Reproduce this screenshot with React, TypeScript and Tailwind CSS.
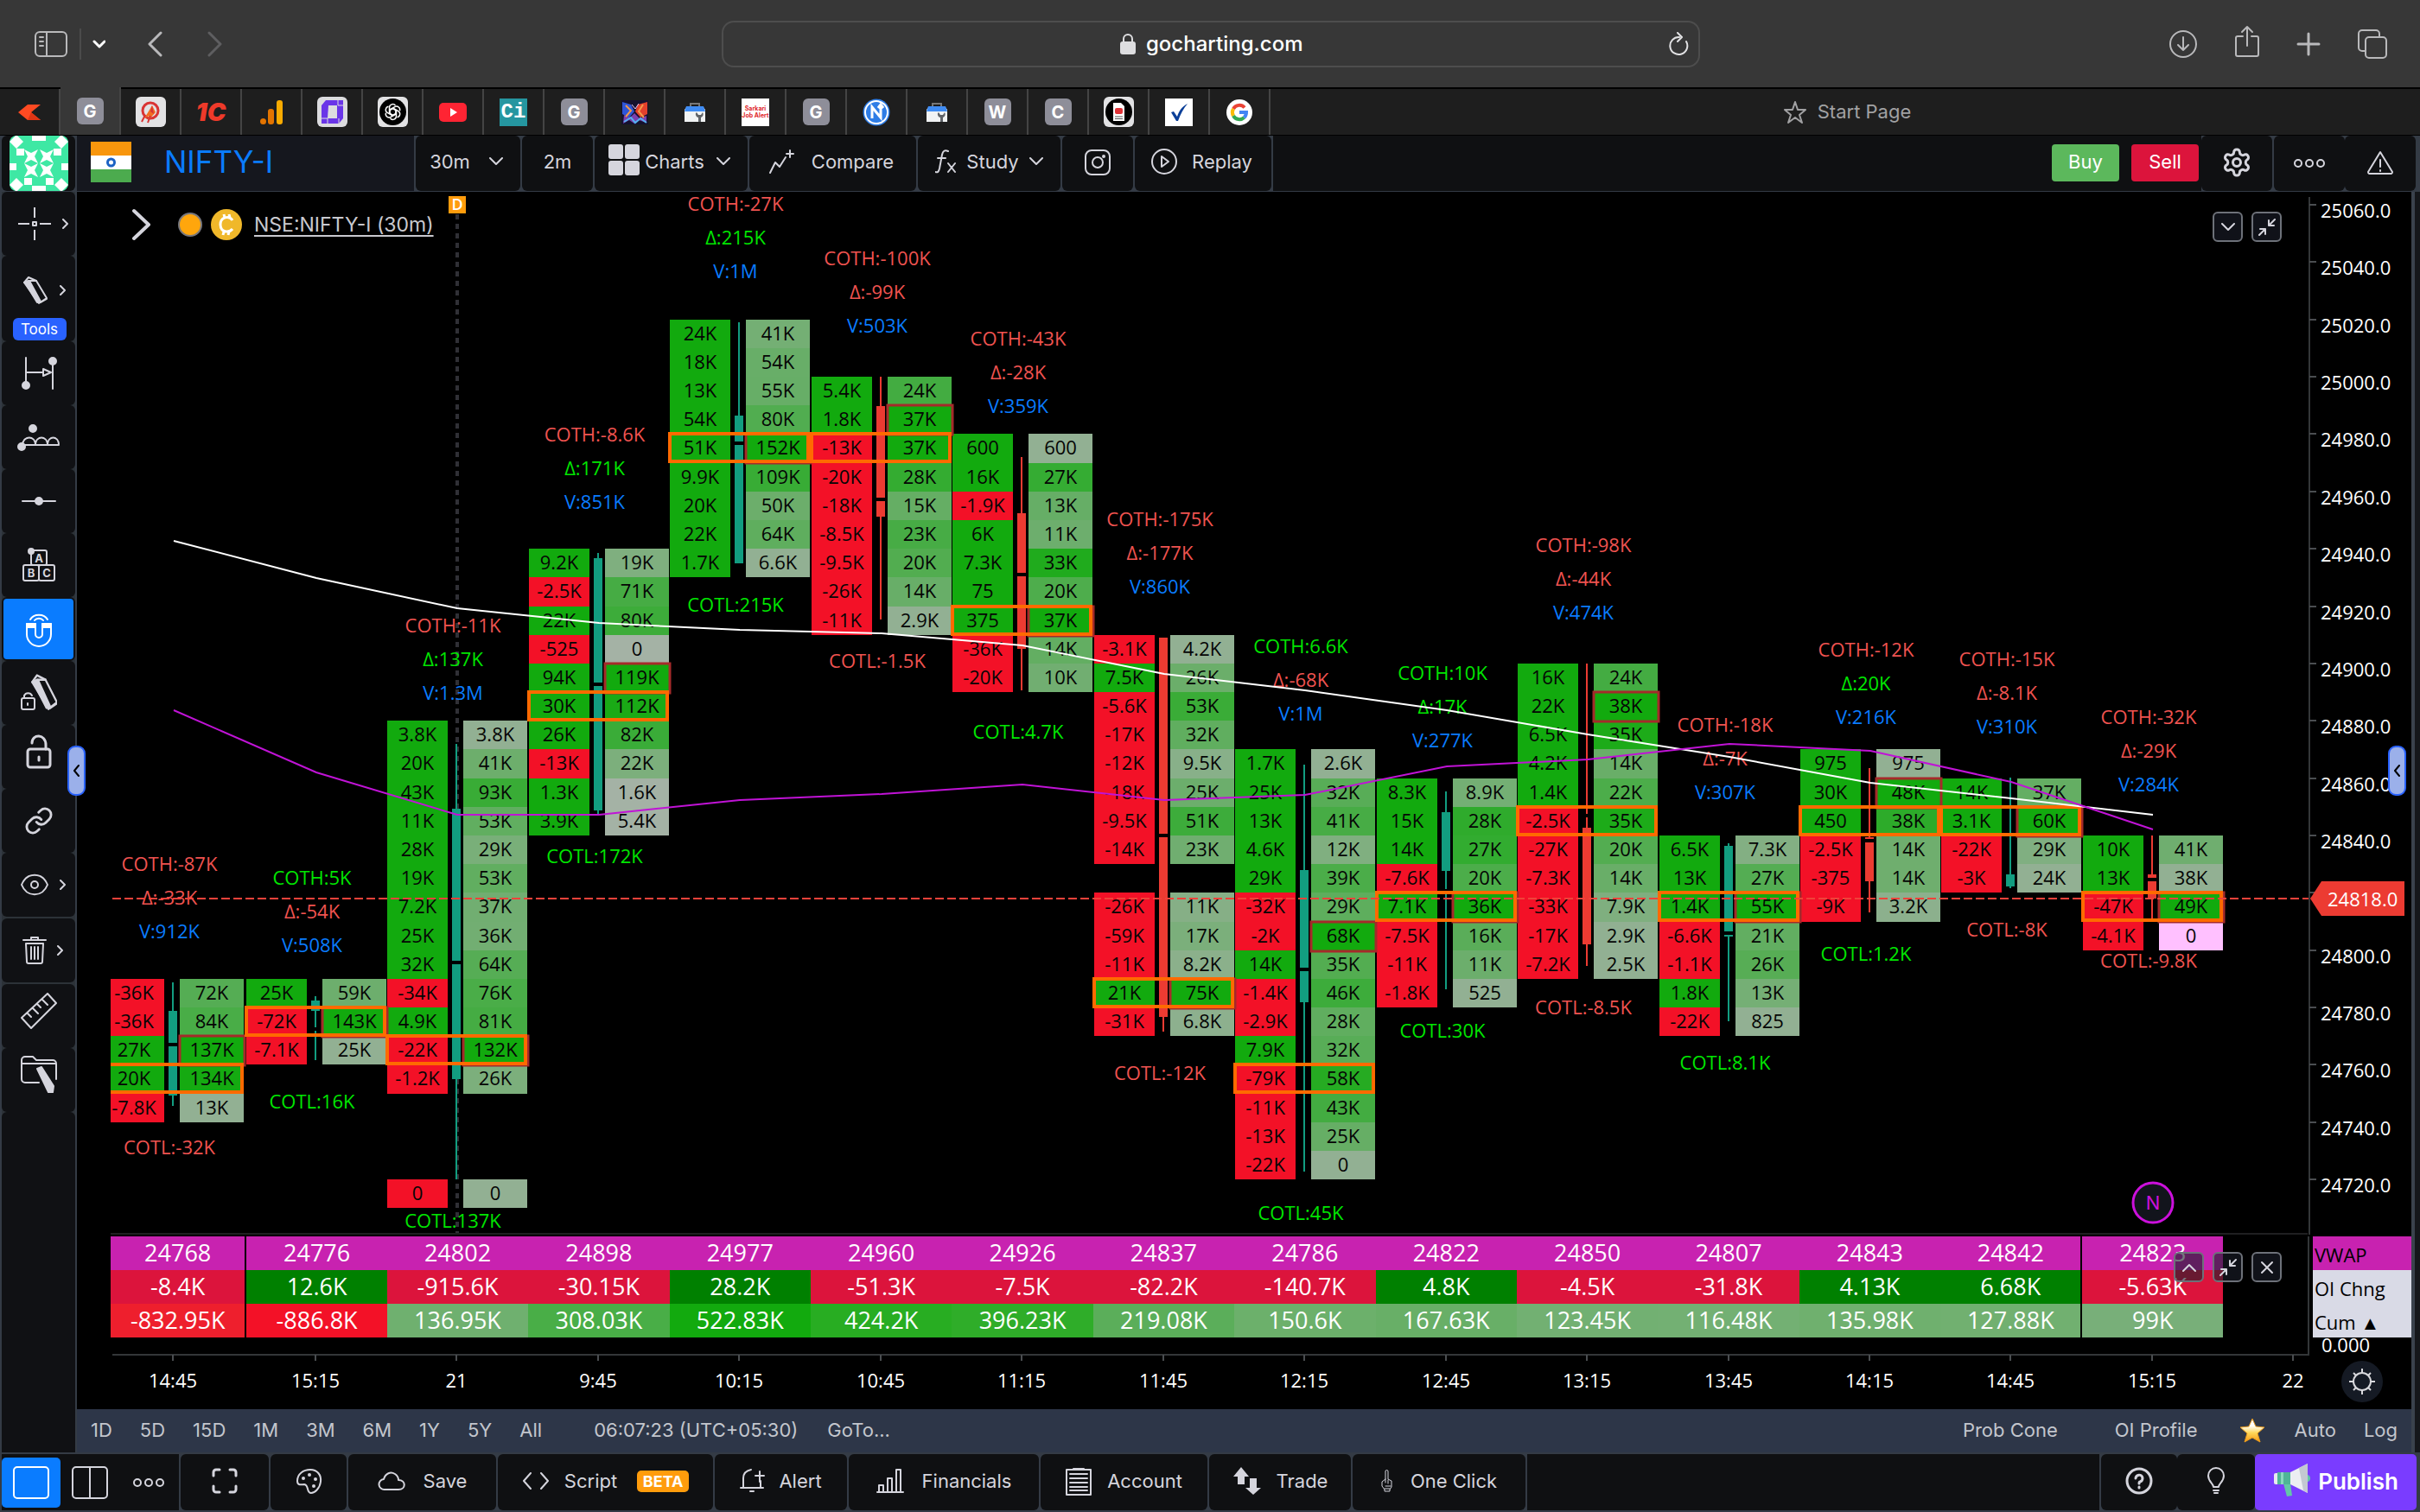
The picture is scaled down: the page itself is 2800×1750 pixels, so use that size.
import type { ReactNode } from "react";

type Row = [string, string] | null;
type Candle = { up: boolean; wick: [number, number]; body: [number, number]; gap?: [number, number] };
type Bar = {
  time: string;
  top: number;
  rows: Row[];
  poc: number;
  max: number;
  coth: string;
  delta: string;
  vol: string;
  cotl: string;
  candle: Candle;
};

const r = (s: string): Row[] =>
  s.split(" ").map((p) => (p === "_" ? null : (p.split("/") as [string, string])));

const BARS: Bar[] = [
  { time: "14:45", top: 24790, rows: r("-36K/72K -36K/84K 27K/137K 20K/134K -7.8K/13K"), poc: 3, max: 2, coth: "-87K", delta: "-33K", vol: "912K", cotl: "-32K", candle: { up: true, wick: [1137, 1280], body: [1170, 1268], gap: [1207, 1211] } },
  { time: "15:15", top: 24790, rows: r("25K/59K -72K/143K -7.1K/25K"), poc: 1, max: 1, coth: "5K", delta: "-54K", vol: "508K", cotl: "16K", candle: { up: true, wick: [1153, 1227], body: [1158, 1170], gap: [1189, 1193] } },
  { time: "21", top: 24880, rows: r("3.8K/3.8K 20K/41K 43K/93K 11K/53K 28K/29K 19K/53K 7.2K/37K 25K/36K 32K/64K -34K/76K 4.9K/81K -22K/132K -1.2K/26K _ _ _ 0/0"), poc: 11, max: 11, coth: "-11K", delta: "137K", vol: "1.3M", cotl: "137K", candle: { up: true, wick: [861, 1365], body: [936, 1249], gap: [1112, 1116] } },
  { time: "9:45", top: 24940, rows: r("9.2K/19K -2.5K/71K 22K/80K -525/0 94K/119K 30K/112K 26K/82K -13K/22K 1.3K/1.6K 3.9K/5.4K"), poc: 5, max: 4, coth: "-8.6K", delta: "171K", vol: "851K", cotl: "172K", candle: { up: true, wick: [640, 943], body: [646, 938], gap: [790, 794] } },
  { time: "10:15", top: 25020, rows: r("24K/41K 18K/54K 13K/55K 54K/80K 51K/152K 9.9K/109K 20K/50K 22K/64K 1.7K/6.6K"), poc: 4, max: 4, coth: "-27K", delta: "215K", vol: "1M", cotl: "215K", candle: { up: true, wick: [373, 652], body: [481, 652], gap: [511, 515] } },
  { time: "10:45", top: 25000, rows: r("5.4K/24K 1.8K/37K -13K/37K -20K/28K -18K/15K -8.5K/23K -9.5K/20K -26K/14K -11K/2.9K"), poc: 2, max: 1, coth: "-100K", delta: "-99K", vol: "503K", cotl: "-1.5K", candle: { up: false, wick: [436, 717], body: [470, 598], gap: [576, 580] } },
  { time: "11:15", top: 24980, rows: r("600/600 16K/27K -1.9K/13K 6K/11K 7.3K/33K 75/20K 375/37K -36K/14K -20K/10K"), poc: 6, max: 6, coth: "-43K", delta: "-28K", vol: "359K", cotl: "4.7K", candle: { up: false, wick: [529, 799], body: [594, 751], gap: [663, 667] } },
  { time: "11:45", top: 24910, rows: r("-3.1K/4.2K 7.5K/26K -5.6K/53K -17K/32K -12K/9.5K -18K/25K -9.5K/51K -14K/23K _ -26K/11K -59K/17K -11K/8.2K 21K/75K -31K/6.8K"), poc: 12, max: 12, coth: "-175K", delta: "-177K", vol: "860K", cotl: "-12K", candle: { up: false, wick: [738, 1194], body: [738, 1177], gap: [965, 969] } },
  { time: "12:15", top: 24870, rows: r("1.7K/2.6K 25K/32K 13K/41K 4.6K/12K 29K/39K -32K/29K -2K/68K 14K/35K -1.4K/46K -2.9K/28K 7.9K/32K -79K/58K -11K/43K -13K/25K -22K/0"), poc: 11, max: 6, coth: "6.6K", delta: "-68K", vol: "1M", cotl: "45K", candle: { up: true, wick: [885, 1356], body: [1007, 1160], gap: [1120, 1124] } },
  { time: "12:45", top: 24860, rows: r("8.3K/8.9K 15K/28K 14K/27K -7.6K/20K 7.1K/36K -7.5K/16K -11K/11K -1.8K/525"), poc: 4, max: 4, coth: "10K", delta: "17K", vol: "277K", cotl: "30K", candle: { up: true, wick: [916, 1145], body: [940, 1008], gap: [1029, 1033] } },
  { time: "13:15", top: 24900, rows: r("16K/24K 22K/38K 6.5K/35K 4.2K/14K 1.4K/22K -2.5K/35K -27K/20K -7.3K/14K -33K/7.9K -17K/2.9K -7.2K/2.5K"), poc: 5, max: 1, coth: "-98K", delta: "-44K", vol: "474K", cotl: "-8.5K", candle: { up: false, wick: [768, 1118], body: [958, 1093], gap: [942, 946] } },
  { time: "13:45", top: 24840, rows: r("6.5K/7.3K 13K/27K 1.4K/55K -6.6K/21K -1.1K/26K 1.8K/13K -22K/825"), poc: 2, max: 2, coth: "-18K", delta: "-7K", vol: "307K", cotl: "8.1K", candle: { up: true, wick: [976, 1182], body: [979, 1084], gap: [1078, 1082] } },
  { time: "14:15", top: 24870, rows: r("975/975 30K/48K 450/38K -2.5K/14K -375/14K -9K/3.2K"), poc: 2, max: 1, coth: "-12K", delta: "20K", vol: "216K", cotl: "1.2K", candle: { up: false, wick: [889, 1056], body: [969, 1020], gap: [971, 975] } },
  { time: "14:45", top: 24860, rows: r("14K/37K 3.1K/60K -22K/29K -3K/24K"), poc: 1, max: 1, coth: "-15K", delta: "-8.1K", vol: "310K", cotl: "-8K", candle: { up: true, wick: [900, 1028], body: [1012, 1026] } },
  { time: "15:15", top: 24840, rows: r("10K/41K 13K/38K -47K/49K -4.1K/0"), poc: 2, max: 2, coth: "-32K", delta: "-29K", vol: "284K", cotl: "-9.8K", candle: { up: false, wick: [967, 1064], body: [1012, 1040], gap: [1016, 1020] } },
];

const VWAP = "24768 24776 24802 24898 24977 24960 24926 24837 24786 24822 24850 24807 24843 24842 24823".split(" ");
const OI = "-8.4K 12.6K -915.6K -30.15K 28.2K -51.3K -7.5K -82.2K -140.7K 4.8K -4.5K -31.8K 4.13K 6.68K -5.63K".split(" ");
const CUM: [string, string][] = [
  ["-832.95K", "#ee1f2d"], ["-886.8K", "#f31127"], ["136.95K", "#6fb06f"], ["308.03K", "#49ae47"], ["522.83K", "#12aa0e"],
  ["424.2K", "#28ad22"], ["396.23K", "#2fad29"], ["219.08K", "#5bae5a"], ["150.6K", "#6cb06b"], ["167.63K", "#68af67"],
  ["123.45K", "#72b072"], ["116.48K", "#73b073"], ["135.98K", "#6fb06e"], ["127.88K", "#71b070"], ["99K", "#78af79"],
];

const WHITE_Y = [626, 669, 704, 721, 729, 733, 747, 780, 799, 822, 850, 876, 906, 924, 943];
const PURPLE_Y = [822, 894, 943, 943, 926, 919, 908, 926, 920, 887, 879, 861, 869, 905, 960];

const cx = (i: number) => (i === 0 ? 200 : Math.round(365 + (i - 1) * 163.45));
const py = (p: number) => 237 + (25060 - p) * 3.318;
const num = (s: string) => (s.endsWith("K") ? parseFloat(s) * 1000 : parseFloat(s));
const tone = (s: string) => (s.startsWith("-") ? "#f05350" : "#00e600");

function shade(bar: Bar, value: string, index: number): string {
  if (bar.top === 24840 && value === "0") return "#ffc0ff";
  if (bar.top === 24940 && num(value) < 6000) return "#a4b2a5";
  const nums = bar.rows.filter((x): x is [string, string] => !!x).map((x) => num(x[1])).filter((n) => n > 0);
  const lo = Math.min(...nums);
  const hi = Math.max(...nums);
  const t = index === bar.max ? 1 : Math.max(0, (num(value) - lo) / (hi - lo));
  return `rgb(${Math.round(146 - 128 * t)}, ${Math.round(176 - 6 * t)}, ${Math.round(147 - 133 * t)})`;
}

const line = (ys: number[]) => ys.map((y, i) => `${cx(i) + 1},${y}`).join(" ");

function Footprint() {
  return (
    <svg viewBox="89 222 2701 1207" className="block h-auto w-full font-['Open_Sans',sans-serif] text-[22px]" role="img" aria-label="NIFTY-I order flow footprint chart">
      <defs>
        <clipPath id="plot">
          <rect x="128" y="222" width="2542" height="1207" />
        </clipPath>
      </defs>
      <path d="M529 248V1429" stroke="#303036" strokeWidth="4" strokeDasharray="6 5" />
      <rect x="519" y="227" width="20" height="20" fill="#ff9c0c" />
      <text x="529" y="236" fill="#fff" fontSize="18" fontWeight="600" textAnchor="middle" dominantBaseline="central">D</text>
      <g clipPath="url(#plot)" textAnchor="middle" dominantBaseline="central">
        {BARS.map((b, i) => {
          const c = cx(i);
          const col = b.candle.up ? "#129d80" : "#ec3b32";
          return (
            <g key={i}>
              {b.rows.map((row, k) => {
                if (!row) return null;
                const y = Math.round(py(b.top - k * 10));
                const h = Math.round(py(b.top - k * 10 - 10)) - y;
                return (
                  <g key={k}>
                    <rect x={c - 80} y={y} width="70" height={h} fill={row[0].startsWith("-") || (row[0] === "0" && i === 2) ? "#f31127" : "#12aa0e"} />
                    <rect x={c + 8} y={y} width="74" height={h} fill={shade(b, row[1], k)} />
                  </g>
                );
              })}
              <path d={`M${c} ${b.candle.wick[0]}V${b.candle.wick[1]}`} stroke={col} strokeWidth="2" />
              <rect x={c - 5} y={b.candle.body[0]} width="10" height={b.candle.body[1] - b.candle.body[0]} fill={col} />
              {b.candle.gap && <rect x={c - 6} y={b.candle.gap[0]} width="12" height="4" fill="#000" />}
            </g>
          );
        })}
        {BARS.map((b, i) => {
          const c = cx(i);
          const my = Math.round(py(b.top - b.max * 10));
          const oy = Math.round(py(b.top - b.poc * 10));
          return (
            <g key={i} fill="none">
              <rect x={c + 8} y={my} width="75" height="34" stroke="#a52a2a" strokeWidth="3" />
              <rect x={c - 80} y={oy} width="160" height="32" stroke="#ff6a00" strokeWidth="4" />
            </g>
          );
        })}
        {BARS.map((b, i) => {
          const c = cx(i);
          const up = b.candle.wick[0];
          return (
            <g key={i}>
              {b.rows.map((row, k) => {
                if (!row) return null;
                const y = py(b.top - k * 10) + 15;
                return (
                  <g key={k} fill="#050505">
                    <text x={c - 45} y={y}>{row[0]}</text>
                    <text x={c + 45} y={y}>{row[1]}</text>
                  </g>
                );
              })}
              <text x={c - 4} y={up - 138} fill={tone(b.coth)}>COTH:{b.coth}</text>
              <text x={c - 4} y={up - 99} fill={tone(b.delta)}>Δ:{b.delta}</text>
              <text x={c - 4} y={up - 60} fill="#0a7cff">V:{b.vol}</text>
              <text x={c - 4} y={b.candle.wick[1] + 47} fill={tone(b.cotl)}>COTL:{b.cotl}</text>
            </g>
          );
        })}
      </g>
      <polyline points={line(WHITE_Y)} fill="none" stroke="#fff" strokeWidth="2" />
      <polyline points={line(PURPLE_Y)} fill="none" stroke="#c013d6" strokeWidth="2" />
      <path d="M130 1040H2672" stroke="#f0423a" strokeWidth="2" strokeDasharray="10 4" />
      <path d="M128 1428H2670" stroke="#1f1f21" strokeWidth="2" />
      <path d="M2672 228V1429" stroke="#333638" strokeWidth="2" />
      <circle cx="2491" cy="1392" r="23" fill="#12141c" stroke="#cc10dc" strokeWidth="3" />
      <text x="2491" y="1392" fill="#cc10dc" textAnchor="middle" dominantBaseline="central" className="font-['Inter',sans-serif]">N</text>
      {Array.from({ length: 18 }, (_, i) => 25060 - i * 20).map((p) => (
        <g key={p}>
          <path d={`M2672 ${Math.round(py(p))}h8`} stroke="#4a4d50" strokeWidth="2" />
          {p !== 24820 && <text x="2685" y={py(p) + 6} fill="#fff" dominantBaseline="central">{p}.0</text>}
        </g>
      ))}
      <path d="M2673 1040L2686 1020H2782V1060H2686Z" fill="#ec3b32" />
      <text x="2693" y="1040" fill="#fff" dominantBaseline="central">24818.0</text>
    </svg>
  );
}

function TimeAxis() {
  return (
    <svg viewBox="89 1567 2701 64" className="block h-auto w-full font-['Open_Sans',sans-serif] text-[22px]" role="img" aria-label="Time axis">
      <path d="M130 1568H2672" stroke="#333638" strokeWidth="2" />
      {[...BARS.map((b) => b.time), "22"].map((t, i) => (
        <g key={i}>
          <path d={`M${cx(i)} 1568v7`} stroke="#4a4d50" strokeWidth="2" />
          <text x={cx(i)} y="1597" fill="#fff" textAnchor="middle" dominantBaseline="central">{t}</text>
        </g>
      ))}
      <circle cx="2733" cy="1599" r="24" fill="#151a24" />
      <g fill="none" stroke="#d8d8dc" strokeWidth="2">
        <circle cx="2733" cy="1599" r="10" />
        <path d="M2733 1589v-5M2733 1609v5M2723 1599h-5M2743 1599h5M2726 1592l-3-3M2740 1592l3-3M2726 1606l-3 3M2740 1606l3 3" />
      </g>
    </svg>
  );
}

function Summary() {
  const edge = (i: number) => (i === 0 || i === 13 ? "border-r-2 border-black" : "");
  return (
    <div className="grid grid-cols-[39fr_2444fr_104fr_114fr] pt-[2px] font-['Open_Sans',sans-serif]">
      <div />
      <table className="h-[117px] w-full table-fixed border-collapse text-center text-[27px] leading-[37px] text-white">
        <tbody>
          <tr className="bg-[#c822b0]">
            {VWAP.map((v, i) => (
              <td key={i} className={`h-[39px] p-0 pb-[2px] ${i === 0 ? "w-[6.4%]" : ""} ${edge(i)}`}>{v}</td>
            ))}
          </tr>
          <tr>
            {OI.map((v, i) => (
              <td key={i} className={`h-[39px] p-0 pb-[2px] ${v.startsWith("-") ? "bg-[#dc143c]" : "bg-[#008000]"} ${edge(i)}`}>{v}</td>
            ))}
          </tr>
          <tr>
            {CUM.map(([v, c], i) => (
              <td key={i} className={`h-[39px] p-0 pb-[2px] ${edge(i)}`} style={{ backgroundColor: c }}>{v}</td>
            ))}
          </tr>
        </tbody>
      </table>
      <div className="mr-[4px] border-r-2 border-[#333638]" />
      <div className="h-[136px] text-[22px] leading-[35px] whitespace-nowrap text-black">
        <div className="h-[39px] bg-[#c822b0] pt-[4px] pl-[2px]">VWAP</div>
        <div className="h-[39px] bg-[#d9dae6] pt-[4px] pl-[2px]">OI Chng</div>
        <div className="h-[39px] bg-[#d9dae6] pt-[4px] pl-[2px]">Cum ▲</div>
        <div className="h-[19px] pl-[10px] leading-[17px] text-white">0.000</div>
      </div>
    </div>
  );
}

function Ico({ w, h, box, sw = 2, fill = "none", children }: { w: number; h: number; box?: string; sw?: number; fill?: string; children: ReactNode }) {
  return (
    <svg width={w} height={h} viewBox={box ?? `0 0 ${w} ${h}`} fill={fill} stroke="currentColor" strokeWidth={sw} strokeLinecap="round" strokeLinejoin="round" className="shrink-0" aria-hidden="true">
      {children}
    </svg>
  );
}

const ChevDown = () => <Ico w={16} h={10}><path d="M1 1l7 7 7-7" /></Ico>;
const ChevRight = () => <Ico w={7} h={12}><path d="M1 1l5 5-5 5" /></Ico>;
const Dots = () => (
  <Ico w={38} h={12}><circle cx="6" cy="6" r="4" /><circle cx="19" cy="6" r="4" /><circle cx="32" cy="6" r="4" /></Ico>
);
const Shrink = () => (
  <Ico w={22} h={22}><path d="M20 2l-7 7M13 3v6h6M2 20l7-7M3 13h6v6" /></Ico>
);

function Letter({ children }: { children: string }) {
  return <span className="flex size-[31px] items-center justify-center rounded-[6px] bg-[#8e8e99] text-[20px] font-bold text-white">{children}</span>;
}
const Toolbox = () => (
  <svg width="26" height="24" viewBox="0 0 26 24" aria-hidden="true">
    <path d="M8 6V2h10v4" fill="none" stroke="#777" strokeWidth="2" />
    <path d="M1 9l3-4h18l3 4v14H1z" fill="#f1f3f4" />
    <path d="M3 5h20l2 6H1z" fill="#3f8cf4" />
    <path d="M14 13a4 4 0 0 0 3 5v5h3v-5a4 4 0 0 0 2-6l-2 3h-3l-2-3z" fill="#5f6368" />
  </svg>
);

const TABS: [string, ReactNode][] = [
  ["Kite", <svg width="26" height="18" viewBox="0 0 26 18" aria-hidden="true"><path d="M11 0h15L15 9l11 9H11L0 9z" fill="#ff4a22" /><path d="M15 9l11 9H11z" fill="#df3514" /></svg>],
  ["GoCharting", <Letter>G</Letter>],
  ["P", <span className="flex size-[35px] items-center justify-center rounded-[6px] bg-[#e2e2e4]"><svg width="26" height="28" viewBox="0 0 26 28" aria-hidden="true"><circle cx="13" cy="12" r="9" fill="none" stroke="#d93434" strokeWidth="3" /><path d="M15 6l-9 15 5-3-1 6 9-10z" fill="#f26b21" /><path d="M15 6l2 10-4-3z" fill="#d93434" /><path d="M7 17l-4 8M13 18l-3 8" stroke="#d93434" strokeWidth="2" /></svg></span>],
  ["1C", <span className="text-[29px] leading-none font-black text-[#ee3a2a] italic">1C</span>],
  ["Analytics", <svg width="26" height="28" viewBox="0 0 26 28" aria-hidden="true"><rect x="19" width="7" height="28" rx="3" fill="#f9ab00" /><rect x="9" y="10" width="7" height="18" rx="3" fill="#e37400" /><circle cx="3.500" cy="24.500" r="3.500" fill="#e37400" /></svg>],
  ["Workspace", <span className="flex size-[35px] items-center justify-center rounded-[6px] bg-[#dcdcdf]"><svg width="27" height="29" viewBox="0 0 27 29" aria-hidden="true"><path d="M6 1h20v21l-5 6H1V7z" fill="#6a35e8" /><path d="M9 7h10v15H8z" fill="#dcdcdf" /><path d="M20 1v6h6M1 22h7v6M21 22v6" stroke="#dcdcdf" strokeWidth="1" fill="none" /></svg></span>],
  ["ChatGPT", <span className="flex size-[35px] items-center justify-center rounded-[6px] bg-[#e2e2e4]"><svg width="31" height="31" viewBox="0 0 31 31" aria-hidden="true"><circle cx="15.500" cy="15.500" r="15.500" fill="#000" /><g fill="none" stroke="#fff" strokeWidth="1.500">{[0, 60, 120, 180, 240, 300].map((a) => (<path key={a} d="M15.500 19.500L11.500 17V10.500a4 4 0 0 1 7-2.500" transform={`rotate(${a} 15.500 15.500)`} />))}</g></svg></span>],
  ["YouTube", <svg width="32" height="22" viewBox="0 0 32 22" aria-hidden="true"><rect width="32" height="22" rx="5" fill="#ff2433" /><path d="M13 6l8 5-8 5z" fill="#fff" /></svg>],
  ["Ci", <span className="flex size-[32px] items-center justify-center bg-[#2596a0] font-['Liberation_Mono',monospace] text-[24px] font-bold text-white">Ci</span>],
  ["G", <Letter>G</Letter>],
  ["Art", <svg width="31" height="28" viewBox="0 0 31 28" aria-hidden="true"><rect width="31" height="28" fill="#15112e" /><path d="M1 2l10 3 4 8-6 7-8-4z" fill="#2f55d8" /><path d="M30 2L19 5l-3 8 6 7 8-4z" fill="#e2402c" /><path d="M3 17l7 3 5-5 6 6 8-3v8l-9-3-5 4-6-4-7 4z" fill="#7a3fae" /><path d="M5 6l6 6-6 7M25 5l-5 8 6 7" stroke="#f39a4a" strokeWidth="2" fill="none" /><path d="M3 25l8-5 5 6 6-5 7 5" stroke="#54b1f0" strokeWidth="2" fill="none" /><path d="M12 5l4 5 4-6" stroke="#e9c9ff" fill="none" /></svg>],
  ["Toolbox", <Toolbox />],
  ["Job Alert", <span className="flex size-[32px] flex-col items-center justify-center bg-white text-[7px] leading-[8px] font-bold text-[#e0262c]"><span>Sarkari</span><span>Job Alert</span></span>],
  ["G", <Letter>G</Letter>],
  ["N", <svg width="32" height="32" viewBox="0 0 32 32" aria-hidden="true"><circle cx="16" cy="16" r="15.500" fill="#2f7de6" /><circle cx="16" cy="16" r="13" fill="none" stroke="#fff" strokeWidth="2" /><path d="M11 23V10l10 12V8M18 11l3-4 3 4" fill="none" stroke="#fff" strokeWidth="3" /></svg>],
  ["Toolbox", <Toolbox />],
  ["W", <Letter>W</Letter>],
  ["C", <Letter>C</Letter>],
  ["Docs", <span className="flex size-[35px] items-center justify-center rounded-[6px] bg-[#e2e2e4]"><svg width="31" height="31" viewBox="0 0 31 31" aria-hidden="true"><circle cx="15.500" cy="15.500" r="15.500" fill="#000" /><path d="M9 5h9l4 4v17H9z" fill="#fff" /><rect x="11" y="11" width="9" height="7" rx="2" fill="#e03237" /><path d="M11 21h9M11 23.500h9" stroke="#555" /></svg></span>],
  ["Check", <span className="flex size-[32px] items-center justify-center bg-white"><svg width="22" height="22" viewBox="0 0 22 22" aria-hidden="true"><path d="M2 11l3-1 4 6C11 9 15 4 21 1c-5 6-8 12-11 20H8z" fill="#0b3f98" /></svg></span>],
  ["Google", <svg width="30" height="30" viewBox="0 0 30 30" aria-hidden="true"><circle cx="15" cy="15" r="15" fill="#fff" /><g fill="none" strokeWidth="4"><path d="M21 9.500A8 8 0 0 0 8 11" stroke="#ea4335" /><path d="M8 11a8 8 0 0 0 0 8" stroke="#fbbc05" /><path d="M8 19a8 8 0 0 0 12.500 2" stroke="#34a853" /><path d="M20.500 21A8 8 0 0 0 23 15h-8" stroke="#4285f4" /></g></svg>],
];

function Browser() {
  const btn = "flex items-center justify-center text-[#b9b9bb]";
  return (
    <header>
      <div className="flex h-[101px] items-center bg-[#373737] pr-[37px] pl-[39px]">
        <div className="flex flex-1 items-center">
          <button aria-label="Sidebar" className={btn}>
            <Ico w={40} h={32}><rect x="2" y="2" width="36" height="28" rx="5" /><path d="M15 2v28M7 8h4M7 13h4M7 18h4" /></Ico>
          </button>
          <span className="mx-[13px] h-[36px] w-[2px] bg-[#4b4b4b]" />
          <button aria-label="Tab groups" className="text-white"><Ico w={15} h={10} sw={3}><path d="M2 2l6 6 6-6" /></Ico></button>
          <button aria-label="Back" className={`${btn} ml-[48px]`}><Ico w={18} h={30} sw={3}><path d="M16 2L3 15l13 13" /></Ico></button>
          <button aria-label="Forward" disabled className="ml-[52px] text-[#5e5e60]"><Ico w={18} h={30} sw={3}><path d="M2 2l13 13L2 28" /></Ico></button>
        </div>
        <label className="flex h-[54px] w-[1132px] items-center rounded-[14px] border-2 border-[#4d4d4d] px-[10px]">
          <span className="flex-1" />
          <svg width="18" height="25" viewBox="0 0 18 25" className="mr-[12px] ml-[8px] text-[#dedee0]" aria-hidden="true"><rect y="10" width="18" height="15" rx="3" fill="currentColor" /><path d="M4 11V7a5 5 0 0 1 10 0v4" fill="none" stroke="currentColor" strokeWidth="2" /></svg>
          <input aria-label="Address" defaultValue="gocharting.com" className="w-[188px] bg-transparent text-[24px] font-medium text-white outline-none" />
          <span className="flex flex-1 justify-end">
            <button aria-label="Reload" className="text-[#e2e2e4]"><Ico w={24} h={28}><path d="M20 11a10 10 0 1 1-8-5M10 1l5 5-5 5" /></Ico></button>
          </span>
        </label>
        <div className="flex flex-1 items-center justify-end gap-[42px]">
          <button aria-label="Downloads" className={btn}><Ico w={34} h={34}><circle cx="17" cy="17" r="15" /><path d="M17 9v15M11 18l6 6 6-6" /></Ico></button>
          <button aria-label="Share" className={`${btn} -mt-[6px]`}><Ico w={30} h={38}><path d="M10 13H4a2 2 0 0 0-2 2v19a2 2 0 0 0 2 2h22a2 2 0 0 0 2-2V15a2 2 0 0 0-2-2h-6M15 24V2M9 8l6-6 6 6" /></Ico></button>
          <button aria-label="New tab" className={btn}><Ico w={28} h={28} sw={3}><path d="M14 2v24M2 14h24" /></Ico></button>
          <button aria-label="Tab overview" className={btn}><Ico w={36} h={36}><rect x="10" y="10" width="24" height="24" rx="4" /><path d="M10 26H6a4 4 0 0 1-4-4V6a4 4 0 0 1 4-4h16a4 4 0 0 1 4 4v4" /></Ico></button>
        </div>
      </div>
      <nav aria-label="Tabs" className="flex h-[56px] border-t-2 border-b border-black bg-[#1e1e1e]">
        {TABS.map(([name, icon], i) => (
          <button key={i} aria-label={name} className={`flex w-[70px] items-center justify-center border-r-2 border-[#444] ${i === 1 ? "-mt-[2px] bg-[#373737]" : ""}`}>{icon}</button>
        ))}
        <button className="flex flex-1 items-center justify-center gap-[12px] pl-[4px] text-[22px] text-[#a1a1a3]">
          <Ico w={28} h={28}><path d="M14 2l3 9h9l-7 6 3 9-8-6-8 6 3-9-7-6h9z" /></Ico>
          Start Page
        </button>
      </nav>
    </header>
  );
}

function Avatar() {
  return (
    <svg width="68" height="64" viewBox="0 0 68 64" aria-hidden="true">
      <rect width="68" height="64" rx="8" fill="#3ee8a4" />
      <g fill="#fff">
        {[[8, 7], [60, 7], [8, 57], [60, 57]].map(([x, y]) => (<path key={`${x}-${y}`} d={`M${x} ${y - 8}l8 8-8 8-8-8z`} />))}
        {[[25, 24], [43, 24], [25, 40], [43, 40]].map(([x, y]) => (<path key={`${x}-${y}`} d={`M${x - 8} ${y - 8}l8 4 8-4-4 8 4 8-8-4-8 4 4-8z`} />))}
        <path d="M26 0h16v6H26zM26 58h16v6H26zM0 32h8v8H0zM60 32h8v8h-8zM8 15h9v8H8zM51 15h9v8h-9zM17 49h9v8h-9zM42 49h9v8h-9z" />
      </g>
    </svg>
  );
}

function TopBar() {
  const cell = "flex h-full items-center rounded-[6px] bg-[#0f1012]";
  return (
    <div className="flex h-[64px] gap-[2px] bg-[#343b45] px-[2px] text-[22px] text-[#d5d5dd]">
      <button aria-label="Account" className={`${cell} w-[85px] justify-center`}><Avatar /></button>
      <button className="flex h-full w-[390px] items-center bg-[#15171e] pb-[3px] pl-[16px] text-[35px] text-[#0a7cff]">
        <svg width="47" height="47" viewBox="0 0 47 47" className="mr-[38px]" aria-hidden="true"><rect width="47" height="16" fill="#f8960d" /><rect y="16" width="47" height="16" fill="#fff" /><rect y="32" width="47" height="15" fill="#4cab4e" /><circle cx="23.500" cy="24" r="4" fill="none" stroke="#1b62c4" strokeWidth="3" /></svg>
        NIFTY-I
      </button>
      <button className={`${cell} w-[121px] justify-center gap-[22px] pr-[4px] pb-[4px]`}>30m<ChevDown /></button>
      <button className={`${cell} w-[82px] justify-center pb-[4px]`}>2m</button>
      <button className={`${cell} w-[177px] justify-center pr-[4px] pb-[4px]`}>
        <svg width="36" height="36" viewBox="0 0 36 36" className="mr-[6px] -mt-[4px]" fill="currentColor" aria-hidden="true"><rect width="17" height="17" rx="3" /><rect x="19" width="17" height="17" rx="3" /><rect y="19" width="17" height="17" rx="3" /><rect x="19" y="19" width="17" height="17" rx="3" /></svg>
        Charts<span className="ml-[14px]"><ChevDown /></span>
      </button>
      <button className={`${cell} w-[193px] justify-center gap-[20px] pr-[4px] pb-[4px]`}><Ico w={30} h={30}><path d="M2 28l6-12 5 5 7-11M21 6h8M25 2v8" /></Ico>Compare</button>
      <button className={`${cell} w-[165px] justify-center gap-[12px] pb-[4px]`}>
        <Ico w={24} h={28}><path d="M15 2c-4-2-6 0-7 4L5 22c-1 4-2 5-5 4M3 10h9M15 16l8 10M23 16l-8 10" /></Ico>Study<ChevDown />
      </button>
      <button aria-label="Snapshot" className={`${cell} w-[82px] justify-center pb-[2px]`}><Ico w={32} h={32}><rect x="2" y="2" width="28" height="28" rx="7" /><circle cx="16" cy="16" r="6" /><circle cx="23" cy="9" r="1" /></Ico></button>
      <button className={`${cell} w-[158px] justify-center gap-[16px] pr-[4px] pb-[4px]`}><Ico w={32} h={32}><circle cx="16" cy="16" r="14" /><path d="M13 10l8 6-8 6z" /></Ico>Replay</button>
      <div className="flex-1 bg-[#0f1012]" />
      <div className="-ml-[2px] flex items-center gap-[14px] bg-[#0f1012] pr-[3px] pb-[2px] text-[22px] text-white">
        <button className="h-[43px] w-[78px] rounded-[4px] bg-[#5cb85c] pb-[2px]">Buy</button>
        <button className="h-[43px] w-[78px] rounded-[4px] bg-[#dc143c] pb-[2px]">Sell</button>
      </div>
      <button aria-label="Settings" className={`${cell} -ml-[2px] w-[82px] justify-center pb-[2px]`}>
        <Ico w={36} h={36} box="0 0 24 24"><path d="M12.220 2h-.440a2 2 0 0 0-2 2v.180a2 2 0 0 1-1 1.730l-.430.250a2 2 0 0 1-2 0l-.150-.080a2 2 0 0 0-2.730.730l-.220.380a2 2 0 0 0 .730 2.730l.150.100a2 2 0 0 1 1 1.720v.510a2 2 0 0 1-1 1.740l-.150.090a2 2 0 0 0-.730 2.730l.220.380a2 2 0 0 0 2.730.730l.150-.080a2 2 0 0 1 2 0l.430.250a2 2 0 0 1 1 1.730V20a2 2 0 0 0 2 2h.440a2 2 0 0 0 2-2v-.180a2 2 0 0 1 1-1.730l.430-.250a2 2 0 0 1 2 0l.150.080a2 2 0 0 0 2.730-.730l.220-.390a2 2 0 0 0-.730-2.730l-.150-.080a2 2 0 0 1-1-1.740v-.500a2 2 0 0 1 1-1.740l.150-.090a2 2 0 0 0 .730-2.730l-.220-.380a2 2 0 0 0-2.730-.730l-.150.080a2 2 0 0 1-2 0l-.430-.250a2 2 0 0 1-1-1.730V4a2 2 0 0 0-2-2z" /><circle cx="12" cy="12" r="3" /></Ico>
      </button>
      <button aria-label="More" className={`${cell} w-[82px] justify-center`}><Dots /></button>
      <button aria-label="Warnings" className={`${cell} -ml-[2px] mr-[3px] w-[82px] justify-center pb-[2px]`}><Ico w={32} h={30}><path d="M16 3L2 26a2 2 0 0 0 1 2h26a2 2 0 0 0 1-2zM16 12v8M16 24v1" /></Ico></button>
    </div>
  );
}

const Pencil = () => (
  <g><path d="M3 8l5-6 9 4 12 20-9 6L3 8z" /><path d="M3 8l6-2 13 24" /><path d="M4 8l4-2 13 24-3 1z" fill="currentColor" /><path d="M9 6l8 0M22 31l7-4" /></g>
);

const TOOLS: { name: string; arrow?: boolean; active?: boolean; raised?: boolean; gap?: boolean; icon: ReactNode }[] = [
  { name: "Crosshair", arrow: true, icon: <Ico w={40} h={40}><path d="M1 20h13M26 20h13M20 1v12M20 27v12" strokeLinecap="butt" /><rect x="18" y="18" width="4" height="4" /></Ico> },
  { name: "Tools", arrow: true, icon: <Ico w={32} h={40} box="0 -2 32 38"><Pencil /></Ico> },
  { name: "Projection", icon: <Ico w={42} h={40}><path d="M6 2v34M37 4v34M6 19h20M26 15l9 4-9 4z" /><circle cx="6" cy="34" r="4" fill="currentColor" /><circle cx="37" cy="6" r="4" fill="currentColor" /></Ico> },
  { name: "Cycles", icon: <Ico w={50} h={34}><path d="M5 26h43M6 25c2-10 14-10 15 0 1-10 13-10 14 0 1-10 12-10 13 0" /><circle cx="5" cy="28" r="4" fill="currentColor" /><circle cx="18" cy="7" r="4" fill="currentColor" /></Ico> },
  { name: "Line", icon: <Ico w={40} h={10}><path d="M1 5h38" /><circle cx="20" cy="5" r="4" fill="currentColor" /></Ico> },
  { name: "Labels", icon: <svg width="38" height="40" viewBox="0 0 38 40" fill="none" stroke="currentColor" strokeWidth="2" aria-hidden="true"><rect x="10" y="3" width="18" height="17" rx="2" /><rect x="1" y="20" width="18" height="18" rx="2" /><rect x="19" y="20" width="18" height="18" rx="2" /><circle cx="10" cy="4" r="3" fill="currentColor" /><g fill="currentColor" stroke="none" fontSize="13" fontWeight="700" textAnchor="middle"><text x="19" y="17">A</text><text x="10" y="34">B</text><text x="28" y="34">C</text></g></svg> },
  { name: "Magnet", active: true, icon: <Ico w={30} h={44}><path d="M1 16v12a14 14 0 0 0 28 0V16H19v12a4 4 0 0 1-8 0V16z" /><path d="M1 16h10v4H1zM19 16h10v4H19z" fill="currentColor" /><path d="M5 11a11 9 0 0 1 20 0M10 12a6 5 0 0 1 10 0" /></Ico> },
  { name: "Lock drawing mode", icon: <Ico w={42} h={46}><g transform="translate(10 0) scale(1.1 1.3)"><Pencil /></g><rect x="1" y="29" width="15" height="13" rx="2" fill="#101114" /><path d="M4 29v-3a5 5 0 0 1 9 0M8 35v2" /></Ico> },
  { name: "Lock all", raised: true, icon: <Ico w={30} h={42} sw={3}><rect x="2" y="18" width="26" height="21" rx="3" /><path d="M7 11c0-11 16-11 16 2v5M15 27v4" /></Ico> },
  { name: "Link", icon: <Ico w={34} h={34} box="0 0 24 24"><path d="M10 13a5 5 0 0 0 7.540.540l3-3a5 5 0 0 0-7.070-7.070l-1.720 1.710M14 11a5 5 0 0 0-7.540-.540l-3 3a5 5 0 0 0 7.070 7.070l1.710-1.710" /></Ico> },
  { name: "Visibility", arrow: true, icon: <Ico w={34} h={26}><path d="M2 13C8-2 26-2 32 13 26 28 8 28 2 13z" /><circle cx="17" cy="13" r="4" /></Ico> },
  { name: "Delete", arrow: true, gap: true, icon: <Ico w={28} h={34}><path d="M1 5h26M10 5V2h8v3M4 9l1 21a2 2 0 0 0 2 2h14a2 2 0 0 0 2-2l1-21zM10 13v14M14 13v14M18 13v14" /></Ico> },
  { name: "Measure", gap: true, raised: true, icon: <Ico w={42} h={42}><path d="M1 29L31 1l10 11-29 29zM8 24l4 4M14 18l6 6M19 13l4 4M25 8l6 6" /></Ico> },
  { name: "Drawings", raised: true, icon: <Ico w={42} h={44}><path d="M21 31H5a4 4 0 0 1-4-4V5a4 4 0 0 1 4-4h9l4 4h19a4 4 0 0 1 4 4v18M1 9h40" /><path d="M19 15l5-2 14 22-1 7h-5z" fill="currentColor" /></Ico> },
];

function Sidebar() {
  return (
    <aside className="relative flex w-[89px] shrink-0 flex-col border-r-2 border-l-2 border-[#343b45] bg-[#2c3238] text-[#d5d5dd]">
      {TOOLS.map((t) => (
        <button
          key={t.name}
          aria-label={t.name}
          className={`flex w-full flex-col items-center justify-center rounded-[6px] ${t.name === "Tools" ? "h-[99px] pt-[18px] pl-[2px]" : "h-[74px]"} ${t.raised ? "pb-[12px]" : ""} ${t.gap ? "mt-[2px]" : ""} ${t.active ? "border-2 border-[#101114] bg-[#0a7cff] text-white" : "bg-[#101114]"}`}
        >
          <span className={`flex items-center ${t.arrow ? "gap-[12px] pl-[10px]" : ""}`}>
            {t.icon}
            {t.arrow && <ChevRight />}
          </span>
          {t.name === "Tools" && <span className="mt-[12px] h-[26px] w-[62px] rounded-[6px] bg-[#2962ff] text-[17px] leading-[26px] text-white">Tools</span>}
        </button>
      ))}
      <div className="flex-1 rounded-t-[6px] bg-[#101114]" />
      <button aria-label="Collapse toolbar" className="absolute top-[641px] -right-[12px] z-10 flex h-[58px] w-[21px] items-center justify-center rounded-[9px] border-2 border-[#2962ff] bg-[#9bb0ea] text-black"><Ico w={7} h={16}><path d="M6 2L1 8l5 6" /></Ico></button>
    </aside>
  );
}

function StatusBar() {
  return (
    <div className="flex h-[50px] items-center bg-[#2d3648] px-[16px] pb-[2px] text-[22px] text-[#c3c6cd]">
      <div className="flex gap-[32px]">
        {["1D", "5D", "15D", "1M", "3M", "6M", "1Y", "5Y", "All"].map((t) => (<button key={t}>{t}</button>))}
      </div>
      <button className="ml-[60px]">06:07:23 (UTC+05:30)</button>
      <button className="ml-[34px]">GoTo...</button>
      <div className="flex-1" />
      <button>Prob Cone</button>
      <button className="ml-[66px]">OI Profile</button>
      <button aria-label="Favourite" className="ml-[48px]">
        <svg width="30" height="30" viewBox="0 0 30 30" aria-hidden="true"><defs><linearGradient id="star" x1="0" y1="0" x2="0" y2="1"><stop offset="0.300" stopColor="#fff" /><stop offset="0.600" stopColor="#ffd75a" /><stop offset="1" stopColor="#f79a12" /></linearGradient></defs><path d="M15 2l4 9 10 1-8 7 3 10-9-5-9 5 3-10-8-7 10-1z" fill="url(#star)" stroke="#e89a1c" /></svg>
      </button>
      <button className="ml-[34px]">Auto</button>
      <button className="ml-[32px]">Log</button>
    </div>
  );
}

function BottomBar() {
  const cell = "flex h-full shrink-0 items-center justify-center rounded-[6px] bg-[#0f1012] pb-[3px]";
  return (
    <footer className="flex h-[69px] gap-[2px] border-t-2 border-b-2 border-[#343b45] bg-[#343b45] px-[2px] text-[22px] text-[#d5d5dd]">
      <div className="flex w-[205px] items-center bg-[#0f1012]">
        <button aria-label="Single layout" className="flex h-[58px] w-[68px] items-center justify-center rounded-[5px] bg-[#0a7cff] text-white"><Ico w={42} h={38}><rect x="1" y="1" width="40" height="36" rx="4" /></Ico></button>
        <button aria-label="Split layout" className="ml-[13px]"><Ico w={42} h={38}><rect x="1" y="1" width="40" height="36" rx="4" /><path d="M21 1v36" /></Ico></button>
        <button aria-label="More layouts" className="ml-[28px]"><Dots /></button>
      </div>
      <button aria-label="Fullscreen" className={`${cell} w-[102px]`}><Ico w={30} h={30} sw={3}><path d="M2 9V5a3 3 0 0 1 3-3h4M21 2h4a3 3 0 0 1 3 3v4M28 21v4a3 3 0 0 1-3 3h-4M9 28H5a3 3 0 0 1-3-3v-4" /></Ico></button>
      <button aria-label="Theme" className={`${cell} w-[88px]`}><Ico w={31} h={31}><path d="M17 2c8 0 13 6 12 14-1 8-7 13-11 13-6 0-2-9-8-10-3 0-8 2-8-4C2 7 9 2 17 2z" /><g fill="currentColor" stroke="none"><circle cx="9" cy="12" r="2" /><circle cx="16" cy="8" r="2" /><circle cx="23" cy="13" r="2" /><circle cx="21" cy="21" r="2" /></g></Ico></button>
      <button className={`${cell} w-[171px] gap-[21px]`}><Ico w={32} h={24}><path d="M8 22a6 6 0 0 1-1-12C9 3 15 1 20 4c3 2 4 4 4 7 9 0 9 11 0 11z" /></Ico>Save</button>
      <button className={`${cell} w-[249px] gap-[17px]`}><Ico w={32} h={20}><path d="M10 1L2 10l8 9M22 1l8 9-8 9" /></Ico>Script<span className="ml-[6px] h-[25px] w-[60px] rounded-[5px] bg-[#ff9c0c] text-[18px] leading-[25px] font-bold text-white">BETA</span></button>
      <button className={`${cell} w-[153px] gap-[16px]`}><Ico w={29} h={30}><path d="M1 23h26M4 23V12c0-6 4-9 9-10M24 15v8M12 27h4M23 4v12M18 9h10" /></Ico>Alert</button>
      <button className={`${cell} w-[220px] gap-[21px]`}><Ico w={32} h={30}><path d="M1 28h30M3 27v-7h5v7M13 27V12h5v15M23 27V2h5v25" /></Ico>Financials</button>
      <button className={`${cell} w-[193px] gap-[18px]`}><Ico w={30} h={34}><rect x="1" y="4" width="28" height="29" /><path d="M9 3h12M5 9h20M5 14h20M5 19h20M5 24h20M5 28h20" /></Ico>Account</button>
      <button className={`${cell} w-[164px] gap-[17px]`}><svg width="34" height="34" viewBox="0 0 34 34" fill="currentColor" aria-hidden="true"><path d="M10 1l9 11h-5v9H6v-9H1z" /><path d="M24 33l-9-8h5V14h8v11h5z" /></svg>Trade</button>
      <button className={`${cell} w-[200px] gap-[20px]`}><Ico w={14} h={26} sw={1}><path d="M5 15V2a1 1 0 0 1 3 0v9l4 2v7l-2 3v2H4v-2l-3-4v-5l4-3M8 12v4M5 19h6M4 22h6" /></Ico>One Click</button>
      <div className="h-full flex-1 bg-[#0f1012]" />
      <button aria-label="Help" className={`${cell} w-[88px]`}><Ico w={32} h={32} sw={3}><circle cx="16" cy="16" r="14" /><path d="M12 13a4 4 0 1 1 5 4c-1 0-1 1-1 2M16 23v1" /></Ico></button>
      <button aria-label="Ideas" className={`${cell} -ml-[2px] w-[90px]`}><Ico w={22} h={32}><path d="M8 23c0-4-6-6-6-13a9 9 0 0 1 18 0c0 7-6 9-6 13zM8 27h6M9 30h4" /></Ico></button>
      <button className="mr-[2px] -ml-[2px] flex h-full w-[187px] items-center justify-center gap-[8px] rounded-[5px] bg-[#7a3cff] pb-[3px] text-[26px] font-semibold text-white">
        <svg width="44" height="42" viewBox="0 0 44 42" aria-hidden="true"><path d="M12 24l4 15 6-1-2-14z" fill="#63c7a8" /><rect x="1" y="12" width="6" height="13" rx="2" fill="#e8e8f0" /><path d="M5 11h16v14H5z" fill="#4fb597" /><path d="M9 11h3v14H9z" fill="#8ad8c0" /><path d="M20 11L40 1v34L20 25z" fill="#eceef2" /><path d="M30 6L40 1v34l-5-3z" fill="#c3c8d2" /><path d="M40 14c4 1 4 7 0 8z" fill="#63c7a8" /></svg>
        Publish
      </button>
    </footer>
  );
}

function PanelButton({ label, children }: { label: string; children: ReactNode }) {
  return <button aria-label={label} className="flex size-[35px] items-center justify-center rounded-[6px] border-2 border-[#6d7179] bg-[#1a1e29]/60 text-[#d5d5dd]">{children}</button>;
}

export default function App() {
  return (
    <div className="min-h-screen bg-[#343b45] font-['Inter',sans-serif]">
      <Browser />
      <TopBar />
      <div className="flex border-t border-[#343b45]">
        <Sidebar />
        <main className="relative min-w-0 flex-1 bg-black">
          <Footprint />
          <Summary />
          <TimeAxis />
          <StatusBar />
          <div className="absolute top-[19px] left-[64px] flex items-center">
            <button aria-label="Expand legend" className="text-[#d5d5dd]"><Ico w={22} h={38} sw={4}><path d="M2 3l17 16L2 35" /></Ico></button>
            <span className="ml-[31px] size-[28px] rounded-full border-2 border-[#77777c] bg-[#ffa60c]" />
            <svg width="36" height="36" viewBox="0 0 36 36" className="ml-[10px]" aria-hidden="true"><circle cx="18" cy="18" r="18" fill="#f0b82a" /><path d="M25 13c-4-6-14-4-14 5s10 10 14 5M15 6l1 4M21 6l1 4M14 30l1-4M20 30l1-4" fill="none" stroke="#fff" strokeWidth="3" /></svg>
            <a href="#symbol" className="ml-[14px] text-[23px] text-[#c9c9cf] underline underline-offset-4">NSE:NIFTY-I (30m)</a>
          </div>
          <div className="absolute top-[23px] right-[150px] flex gap-[10px]">
            <PanelButton label="Collapse panel"><ChevDown /></PanelButton>
            <PanelButton label="Shrink panel"><Shrink /></PanelButton>
          </div>
          <div className="absolute top-[1227px] right-[150px] flex gap-[10px]">
            <PanelButton label="Move up"><Ico w={16} h={10}><path d="M1 9l7-7 7 7" /></Ico></PanelButton>
            <PanelButton label="Shrink indicator"><Shrink /></PanelButton>
            <PanelButton label="Close indicator"><Ico w={16} h={16}><path d="M2 2l12 12M14 2L2 14" /></Ico></PanelButton>
          </div>
          <button aria-label="Open side panel" className="absolute top-[641px] right-[6px] flex h-[58px] w-[21px] items-center justify-center rounded-[9px] border-2 border-[#2962ff] bg-[#9bb0ea] text-black"><Ico w={7} h={16}><path d="M6 2L1 8l5 6" /></Ico></button>
        </main>
        <div className="w-[10px] shrink-0 border-l-4 border-[#3a424d] bg-[#15171b]" />
      </div>
      <BottomBar />
    </div>
  );
}
